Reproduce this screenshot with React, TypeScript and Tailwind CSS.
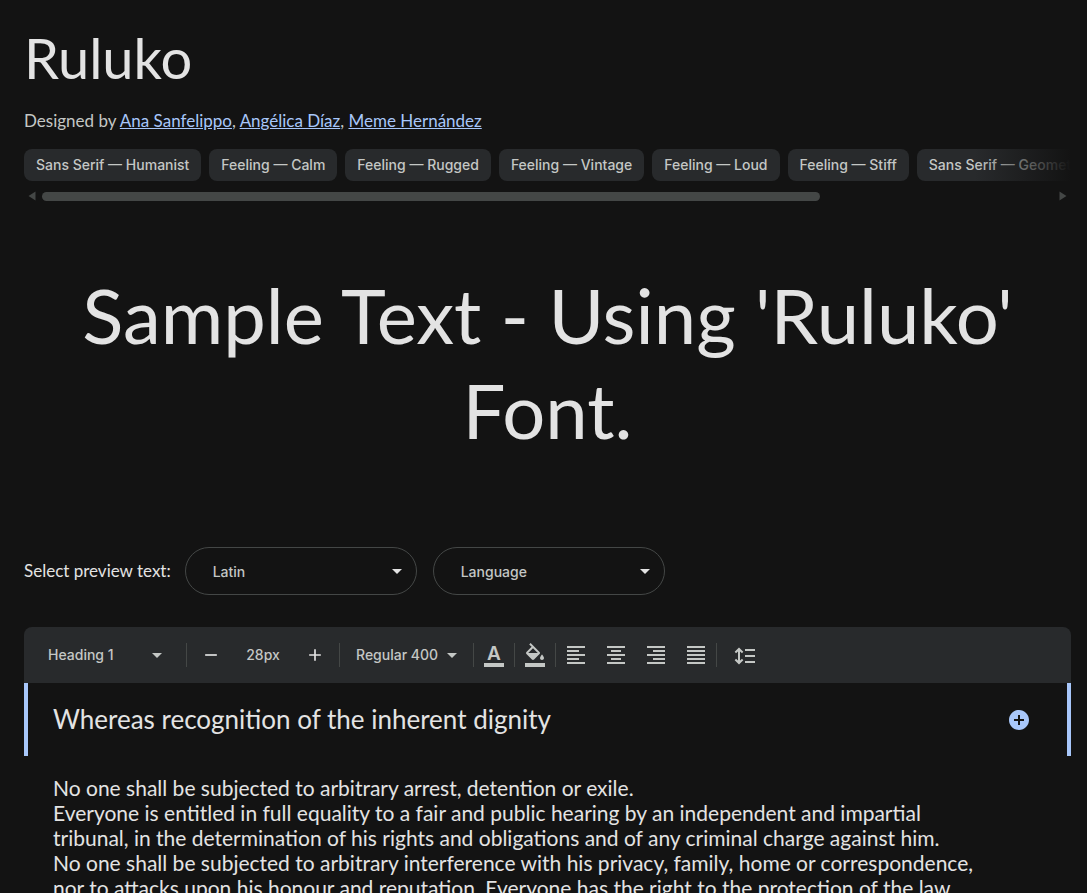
import { useState } from 'react';
import {
  MdAdd,
  MdAddCircle,
  MdArrowDropDown,
  MdFormatAlignCenter,
  MdFormatAlignJustify,
  MdFormatAlignLeft,
  MdFormatAlignRight,
  MdFormatColorFill,
  MdRemove,
} from 'react-icons/md';

const designers = ['Ana Sanfelippo', 'Angélica Díaz', 'Meme Hernández'];

const tags = [
  'Sans Serif — Humanist',
  'Feeling — Calm',
  'Feeling — Rugged',
  'Feeling — Vintage',
  'Feeling — Loud',
  'Feeling — Stiff',
  'Sans Serif — Geometric',
];

const alignments = [
  { label: 'Align left', Icon: MdFormatAlignLeft },
  { label: 'Align center', Icon: MdFormatAlignCenter },
  { label: 'Align right', Icon: MdFormatAlignRight },
  { label: 'Justify', Icon: MdFormatAlignJustify },
];

function PillSelect({ id, label, options }: { id: string; label: string; options: string[] }) {
  return (
    <div className="relative w-[232px]">
      <select
        id={id}
        aria-label={label}
        className="h-12 w-full appearance-none rounded-full border border-[#444746] bg-transparent pl-[27px] pr-10 pt-0.5 font-['Inter',sans-serif] text-sm font-medium text-[#c4c7c5]"
      >
        {options.map((option) => (
          <option key={option}>{option}</option>
        ))}
      </select>
      <MdArrowDropDown className="pointer-events-none absolute right-2 top-3 h-6 w-6 text-[#e3e3e3]" />
    </div>
  );
}

function Divider() {
  return <div className="h-6 w-px shrink-0 bg-[#444746]" />;
}

export default function App() {
  const [size, setSize] = useState(28);

  return (
    <main className="h-screen overflow-hidden bg-[#131313] pl-6 pr-4 pt-7 font-['Lato','Open_Sans',sans-serif] text-[#e3e3e3]">
      <h1 className="text-[56px] leading-[60px]">Ruluko</h1>
      <p className="mt-[21px] text-[17px] leading-6 text-[#c4c7c5]">
        Designed by{' '}
        {designers.map((name, i) => (
          <span key={name}>
            {i > 0 && ', '}
            <a href="#" className="text-[#a8c7fa] underline">{name}</a>
          </span>
        ))}
      </p>

      {/* Tags */}
      <div className="relative mt-4 overflow-hidden">
        <div className="flex gap-2">
          {tags.map((tag) => (
            <button
              key={tag}
              className="h-8 shrink-0 whitespace-nowrap rounded-lg bg-[#282a2c] px-3 font-['Inter',sans-serif] text-sm font-medium text-[#c4c7c5]"
            >
              {tag}
            </button>
          ))}
        </div>
        <div className="pointer-events-none absolute inset-y-0 right-0 w-24 bg-linear-to-r from-transparent to-[#131313]" />
      </div>
      <div className="mt-[10px] flex items-center px-1 text-[#444746]">
        <svg viewBox="0 0 8 10" className="h-[10px] w-2" fill="currentColor">
          <path d="M7.5 0.5v9L0.5 5z" />
        </svg>
        <div className="ml-1.5 flex-1 pr-1.5">
          <div className="h-[9px] w-[77%] rounded-full bg-[#444746]" />
        </div>
        <svg viewBox="0 0 8 10" className="h-[10px] w-2" fill="currentColor">
          <path d="M0.5 0.5v9L7.5 5z" />
        </svg>
      </div>

      {/* Specimen */}
      <div className="mt-[66px] text-center text-[76px] leading-[95px]">
        Sample Text - Using 'Ruluko' Font.
      </div>

      <div className="mt-[90px] flex items-center">
        <label htmlFor="script" className="mr-3.5 text-[17px]">Select preview text:</label>
        <div className="flex gap-4">
          <PillSelect id="script" label="Script" options={['Latin', 'Cyrillic', 'Greek']} />
          <PillSelect id="language" label="Language" options={['Language', 'Spanish', 'Italian']} />
        </div>
      </div>

      {/* Tester */}
      <section className="mt-8">
        <div className="flex h-14 items-center rounded-t-lg bg-[#282a2c] font-['Inter',sans-serif] text-sm font-medium text-[#c4c7c5]">
          <div className="relative ml-6 mr-[17px] w-[121px]">
            <select aria-label="Text style" className="h-6 w-full appearance-none bg-transparent">
              <option>Heading 1</option>
              <option>Paragraph</option>
            </select>
            <MdArrowDropDown className="pointer-events-none absolute right-0 top-0 h-6 w-6" />
          </div>
          <Divider />
          <div className="flex w-[152px] items-center justify-between px-[14px]">
            <button aria-label="Decrease size" onClick={() => setSize(size - 1)}>
              <MdRemove className="h-5 w-5 text-[#e3e3e3]" />
            </button>
            <span>{size}px</span>
            <button aria-label="Increase size" onClick={() => setSize(size + 1)}>
              <MdAdd className="h-5 w-5 text-[#e3e3e3]" />
            </button>
          </div>
          <Divider />
          <div className="relative ml-4 mr-[9px] w-[108px]">
            <select aria-label="Weight" className="h-6 w-full appearance-none bg-transparent">
              <option>Regular 400</option>
            </select>
            <MdArrowDropDown className="pointer-events-none absolute right-0 top-0 h-6 w-6" />
          </div>
          <Divider />
          <button aria-label="Text color" className="mx-[10px] flex h-6 w-5 flex-col items-center justify-end">
            <span className="text-[19px] font-semibold leading-[18px]">A</span>
            <span className="h-1 w-full bg-current" />
          </button>
          <Divider />
          <button aria-label="Background color" className="mx-2">
            <MdFormatColorFill className="h-6 w-6" />
          </button>
          <Divider />
          <div className="mx-2 flex gap-4">
            {alignments.map(({ label, Icon }) => (
              <button key={label} aria-label={label}>
                <Icon className="h-6 w-6" />
              </button>
            ))}
          </div>
          <Divider />
          <button aria-label="Line height" className="ml-4">
            <svg viewBox="0 0 24 24" className="h-6 w-6" fill="currentColor">
              <path d="M6 4.5 10.3 8.8 9 10.2 7 8.4v9.2l2-1.8 1.3 1.4L6 21.5l-4.3-4.3L3 15.8l2 1.8V8.4L3 10.2 1.7 8.8z" />
              <path d="M12 6h10v2H12zM12 12h10v2H12zM12 18h10v2H12z" />
            </svg>
          </button>
        </div>

        <div className="flex items-center justify-between border-x-4 border-[#a8c7fa] py-4 pl-[25px] pr-9">
          <h2 className="text-[26px] leading-[41px]">Whereas recognition of the inherent dignity</h2>
          <button aria-label="Add text" className="text-[#a8c7fa]">
            <MdAddCircle className="h-6 w-6" />
          </button>
        </div>

        <div className="pl-[29px] pr-[92px] pt-[19px] text-[21px] leading-[25px]">
          <p>No one shall be subjected to arbitrary arrest, detention or exile.</p>
          <p>
            Everyone is entitled in full equality to a fair and public hearing by an independent and impartial
            tribunal, in the determination of his rights and obligations and of any criminal charge against him.
          </p>
          <p>
            No one shall be subjected to arbitrary interference with his privacy, family, home or correspondence,
            nor to attacks upon his honour and reputation. Everyone has the right to the protection of the law
            against such interference or attacks.
          </p>
        </div>
      </section>
    </main>
  );
}
